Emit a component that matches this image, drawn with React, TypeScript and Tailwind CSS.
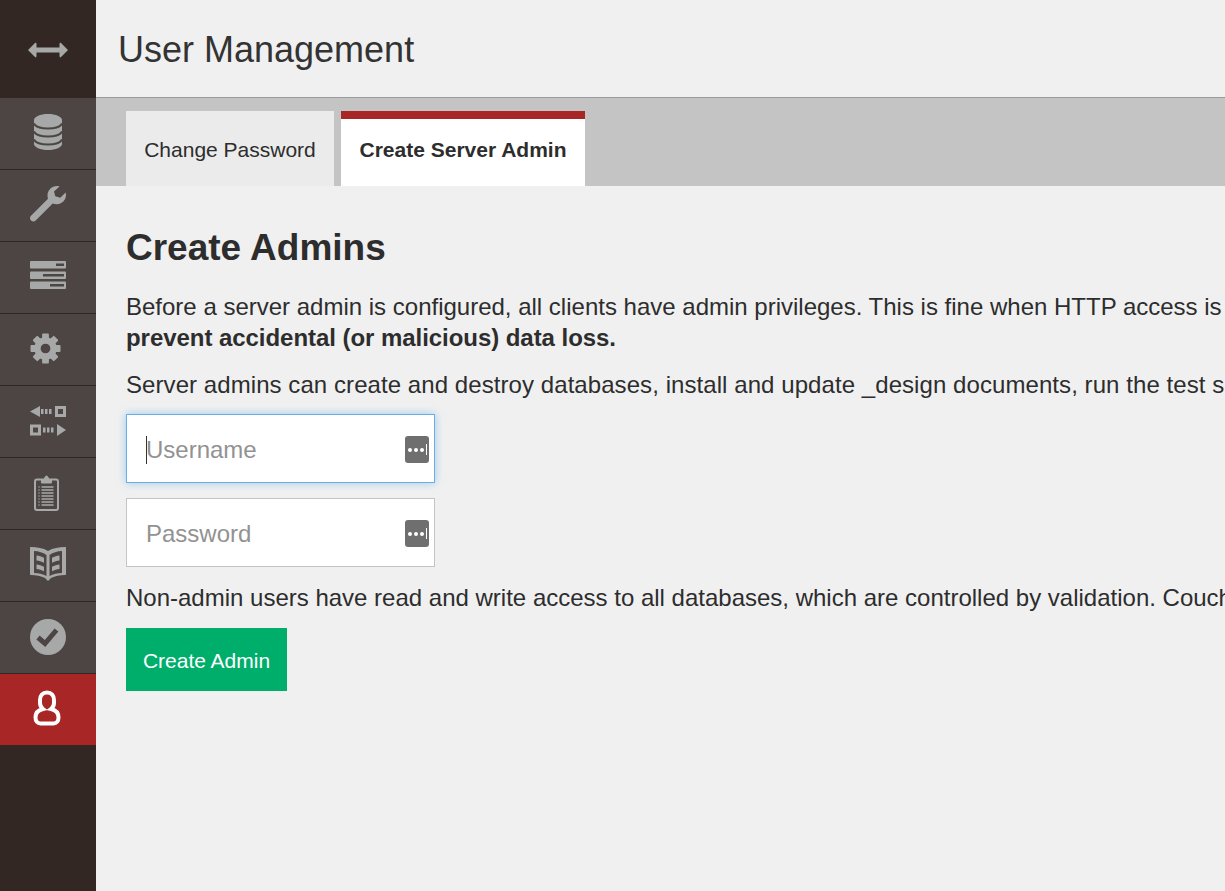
import React from 'react'

const iconColor = '#a7a9a8'
const rowColor = '#4d4543'

const DatabaseIcon = () => (
  <svg width="28" height="36" viewBox="0 0 28 36" className="mb-[3px]">
    <path
      fill={iconColor}
      d="M14 0c7.700 0 14 2.700 14 6v24c0 3.300-6.300 6-14 6S0 33.300 0 30V6c0-3.300 6.300-6 14-6z"
    />
    <g fill="none" stroke={rowColor} strokeWidth="2">
      <path d="M0 9.500c1.500 3.300 7 5 14 5s12.500-1.700 14-5" />
      <path d="M0 17.500c1.500 3.300 7 5 14 5s12.500-1.700 14-5" />
      <path d="M0 25.500c1.500 3.300 7 5 14 5s12.500-1.700 14-5" />
    </g>
  </svg>
)

const WrenchIcon = () => (
  <svg width="36" height="36" viewBox="0 0 36 36" fill={iconColor} className="mb-[3px]">
    <path d="M27 0c-5.300 0-9.500 4.200-9.500 9.500 0 1.200.2 2.200.5 3.200L1 29.700c-1.300 1.300-1.300 3.400 0 4.700 1.300 1.300 3.400 1.300 4.700 0l17-17c1.200.5 2.600.8 4 .8C32 18.200 36 14 36 9c0-.9-.1-1.700-.4-2.500l-5.300 5.200-5-1.500-1.300-4.800L29.500.4C28.700.1 27.900 0 27 0z" />
  </svg>
)

const ServerIcon = () => (
  <svg width="36" height="28" viewBox="0 0 36 28" className="mb-[5px]">
    <rect x="0" y="0" width="36" height="7.500" rx="1" fill={iconColor} />
    <rect x="26" y="2.500" width="8" height="2.500" fill={rowColor} />
    <rect x="0" y="10.500" width="36" height="7.500" rx="1" fill={iconColor} />
    <rect x="13" y="13" width="21" height="2.500" fill={rowColor} />
    <rect x="0" y="20.500" width="36" height="7.500" rx="1" fill={iconColor} />
    <rect x="20" y="23" width="14" height="2.500" fill={rowColor} />
  </svg>
)

const GearIcon = () => (
  <svg width="31" height="31" viewBox="0 0 32 32" className="mb-[2px] mr-[5px]">
    <g fill={iconColor}>
      <circle cx="16" cy="16" r="11.500" />
      {[0, 45, 90, 135, 180, 225, 270, 315].map((angle) => (
        <rect key={angle} x="12.500" y="0.500" width="7" height="7" rx="1" transform={`rotate(${angle} 16 16)`} />
      ))}
    </g>
    <circle cx="16" cy="16" r="5" fill={rowColor} />
  </svg>
)

const ReplicationIcon = () => (
  <svg width="36" height="30" viewBox="0 0 36 30" fill={iconColor} className="mb-[2px]">
    <path d="M0 5.500L10 0v11z" />
    <rect x="11" y="3" width="2.500" height="5" />
    <rect x="15" y="3" width="2.500" height="5" />
    <rect x="19" y="3" width="2.500" height="5" />
    <path fillRule="evenodd" d="M25 0h11v11H25zM28 3v5h5V3z" />
    <path fillRule="evenodd" d="M0 18.500h11v11H0zM3 21.500v5h5v-5z" />
    <rect x="13" y="21.500" width="2.500" height="5" />
    <rect x="17" y="21.500" width="2.500" height="5" />
    <rect x="21" y="21.500" width="2.500" height="5" />
    <path d="M27 18l9 6-9 6z" />
  </svg>
)

const ClipboardIcon = () => (
  <svg width="25" height="36" viewBox="0 0 25 36" fill="none" stroke={iconColor} className="mr-[3px] mb-[1px]">
    <rect x="1" y="4.500" width="23" height="30.500" rx="2" strokeWidth="2" />
    <path d="M7.500 8V4.500h3C10.500 2.500 11.500 1 12.500 1s2 1.500 2 3.500h3V8z" fill={iconColor} strokeWidth="1" />
    <path d="M7.500 12h12M7.500 15h12M7.500 18h12M7.500 21h12M7.500 24h12M7.500 27h12M7.500 30h12" strokeWidth="1.300" />
    <path d="M4.500 12h1M4.500 15h1M4.500 18h1M4.500 21h1M4.500 24h1M4.500 27h1M4.500 30h1" strokeWidth="1.300" />
  </svg>
)

const BookIcon = () => (
  <svg width="36" height="36" viewBox="0 0 36 36" className="mb-[3px]">
    <path
      fill={iconColor}
      d="M1 1c6 0 12 1 17 4 5-3 11-4 17-4 .6 0 1 .4 1 1v26c0 .6-.4 1-1 1-5 0-10 1-14 3l-3 3-3-3c-4-2-9-3-14-3-.6 0-1-.4-1-1V2c0-.6.4-1 1-1z"
    />
    <path
      fill={rowColor}
      d="M16.500 9v21c-3.500-2-8-3-12.500-3V5c5 .2 9 1.500 12.500 4zM19.500 9c3.500-2.500 7.500-3.800 12.500-4v22c-4.500 0-9 1-12.500 3z"
    />
    <path
      fill={iconColor}
      d="M6.500 9.500c2.700.3 5 1 7.500 2.300v5c-2.500-1.300-4.800-2-7.500-2.300zM6.500 18.500c2.700.3 5 1 7.500 2.300v4.500c-2.500-1.300-4.800-2-7.500-2.300zM29.500 9.500c-2.700.3-5 1-7.500 2.300v5c2.500-1.300 4.800-2 7.500-2.300zM29.500 18.500c-2.700.3-5 1-7.500 2.300v4.500c2.500-1.300 4.800-2 7.500-2.300z"
    />
  </svg>
)

const CheckIcon = () => (
  <svg width="36" height="36" viewBox="0 0 36 36" className="mb-[2px]">
    <circle cx="18" cy="18" r="18" fill={iconColor} />
    <path d="M8 18.500l7 6L26.500 11" fill="none" stroke={rowColor} strokeWidth="5" />
  </svg>
)

const UserIcon = () => (
  <svg width="28" height="36" viewBox="0 0 28 36" fill="none" stroke="#ffffff" strokeWidth="4" className="mb-[3px] mr-[3px]">
    <path d="M14 2.500c-4.500 0-7 3-7 7.500v3c0 2.500 1 4.500 3 6-4.500 1-7.500 4-7.500 8.500 0 3.500 2 6 5 6h13c3 0 5-2.500 5-6 0-4.500-3-7.500-7.500-8.500 2-1.500 3-3.500 3-6v-3c0-4.500-2.500-7.500-7-7.500z" />
  </svg>
)

const KeyBadge = () => (
  <div className="flex h-[27px] w-6 items-center justify-center gap-[2px] rounded-[3px] bg-[#6f6f6f]">
    <span className="h-[4px] w-[4px] rounded-full bg-white" />
    <span className="h-[4px] w-[4px] rounded-full bg-white" />
    <span className="h-[4px] w-[4px] rounded-full bg-white" />
    <span className="h-[11px] w-[1px] bg-white" />
  </div>
)

const navItems = [
  <DatabaseIcon key="db" />,
  <WrenchIcon key="setup" />,
  <ServerIcon key="server" />,
  <GearIcon key="config" />,
  <ReplicationIcon key="replication" />,
  <ClipboardIcon key="tasks" />,
  <BookIcon key="docs" />,
  <CheckIcon key="verify" />,
]

const Field = ({ label, focused }: { label: string; focused?: boolean }) => (
  <div
    className={`flex h-[69px] w-[309px] items-center justify-between border bg-white pl-[19px] pr-[5px] pt-[2px] ${
      focused ? 'border-[#66afe9] shadow-[0_0_8px_rgba(102,175,233,0.6)]' : 'border-[#c4c4c4]'
    }`}
  >
    <span className="relative text-[24px] text-[#929292]">
      {focused && <span className="absolute left-0 top-[2px] h-[28px] w-px bg-[#333]" />}
      {label}
    </span>
    <KeyBadge />
  </div>
)

export default function App() {
  return (
    <div className="flex h-[891px] w-[1225px] overflow-hidden bg-[#f0f0f0] font-['Liberation_Sans',Arial,sans-serif] text-[#2d2d2d]">
      <nav className="flex w-[96px] shrink-0 flex-col bg-[#332724]">
        <div className="flex h-[98px] items-center justify-center">
          <svg width="40" height="16" viewBox="0 0 40 16" fill={iconColor} className="mr-[1px] mt-[2px]">
            <path d="M0 8l7.500-7.500 1 1V5.500h23V1.500l1-1L40 8l-7.500 7.500-1-1V10.500h-23v4l-1 1z" />
          </svg>
        </div>
        {navItems.map((icon, i) => (
          <div key={i} className="flex h-[72px] items-center justify-center border-b border-[#332724] bg-[#4d4543]">
            {icon}
          </div>
        ))}
        <div className="flex h-[71px] items-center justify-center bg-[#a92626]">
          <UserIcon />
        </div>
      </nav>

      <main className="min-w-0 flex-1">
        <header className="flex h-[98px] items-center border-b border-[#999] pl-[22px]">
          <h1 className="mt-[3px] text-[36px] text-[#333]">User Management</h1>
        </header>

        <div className="flex h-[88px] items-end gap-[7px] bg-[#c4c4c4] pl-[30px]">
          <div className="flex h-[75px] w-[208px] items-center justify-center bg-[#ebebeb] pt-[2px] text-[21px]">
            Change Password
          </div>
          <div className="flex h-[75px] w-[244px] items-center justify-center border-t-[8px] border-[#a92626] bg-white pb-[6px] text-[21px] font-bold">
            Create Server Admin
          </div>
        </div>

        <section className="overflow-hidden whitespace-nowrap pl-[30px] text-[24px] leading-[31px]">
          <h2 className="mt-[41px] text-[37px] font-bold leading-[42px]">Create Admins</h2>
          <p className="mt-[22px]">
            Before a server admin is configured, all clients have admin privileges. This is fine when HTTP access is
            restricted to trusted users.
            <br />
            <strong className="tracking-[-0.05px]">prevent accidental (or malicious) data loss.</strong>
          </p>
          <p className="mt-[16px] tracking-[0.07px]">
            Server admins can create and destroy databases, install and update _design documents, run the test suite,
            and edit all aspects of CouchDB configuration.
          </p>
          <div className="mt-[14px] flex flex-col gap-[15px]">
            <Field label="Username" focused />
            <Field label="Password" />
          </div>
          <p className="mt-[15px]">
            Non-admin users have read and write access to all databases, which are controlled by validation. CouchDB can
            be configured to block all access to anonymous users.
          </p>
          <button className="mt-[15px] flex h-[63px] w-[161px] items-center justify-center bg-[#00ae6b] pt-[2px] text-[21px] text-white">
            Create Admin
          </button>
        </section>
      </main>
    </div>
  )
}
